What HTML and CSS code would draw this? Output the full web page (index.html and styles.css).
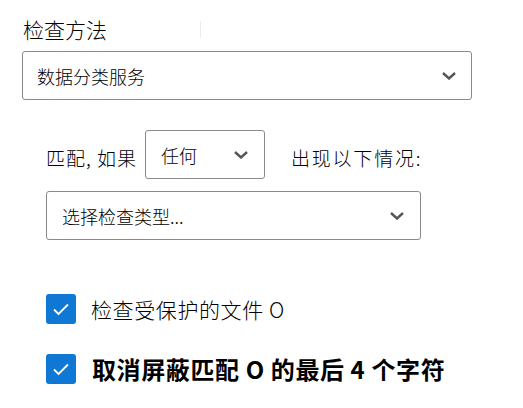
FILE: index.html
```html
<!DOCTYPE html>
<html lang="zh-CN">
<head>
<meta charset="utf-8">
<link rel="stylesheet" href="styles.css">
</head>
<body>
<div class="page">
  <div class="label-row">
    <span class="label">检查方法</span>
    <span class="caret-line"></span>
  </div>
  <div class="select select-wide">
    <span class="select-text">数据分类服务</span>
    <svg class="chev" width="14" height="8" viewBox="0 0 14 8"><path d="M1 1 L7 6.5 L13 1" fill="none" stroke="#555" stroke-width="2.4"/></svg>
  </div>
  <div class="conditions">
    <div class="match-row">
      <span class="match-text">匹配, 如果</span>
      <div class="select select-small">
        <span class="select-text">任何</span>
        <svg class="chev" width="14" height="8" viewBox="0 0 14 8"><path d="M1 1 L7 6.5 L13 1" fill="none" stroke="#555" stroke-width="2.4"/></svg>
      </div>
      <span class="match-text after">出现以下情况:</span>
    </div>
    <div class="select select-type">
      <span class="select-text">选择检查类型...</span>
      <svg class="chev" width="14" height="8" viewBox="0 0 14 8"><path d="M1 1 L7 6.5 L13 1" fill="none" stroke="#555" stroke-width="2.4"/></svg>
    </div>
    <div class="checks">
      <div class="check-row">
        <span class="box"><svg width="18" height="14" viewBox="0 0 18 14"><path d="M2 7.5 L6.5 12 L16 2.5" fill="none" stroke="#fff" stroke-width="1.8"/></svg></span>
        <span class="check-text">检查受保护的文件 O</span>
      </div>
      <div class="check-row">
        <span class="box"><svg width="18" height="14" viewBox="0 0 18 14"><path d="M2 7.5 L6.5 12 L16 2.5" fill="none" stroke="#fff" stroke-width="1.8"/></svg></span>
        <span class="check-text bold">取消屏蔽匹配 O 的最后 4 个字符</span>
      </div>
    </div>
  </div>
</div>
</body>
</html>
```
FILE: styles.css
```css
html, body {
  margin: 0;
  padding: 0;
  background: #fff;
}
body {
  font-family: "Noto Sans CJK SC", "Noto Sans", sans-serif;
  font-weight: 300;
  color: #000;
  width: 523px;
  height: 408px;
  overflow: hidden;
}
.page {
  padding: 14px 0 0 22px;
}
.label-row {
  display: flex;
  align-items: center;
  height: 30px;
  padding-left: 1px;
}
.label {
  font-size: 21px;
  line-height: 30px;
}
.caret-line {
  width: 1px;
  height: 17px;
  background: #ececec;
  margin-left: 93px;
}
.select {
  box-sizing: border-box;
  height: 49px;
  border: 1px solid #8a8a8a;
  border-radius: 3px;
  display: flex;
  align-items: center;
  justify-content: space-between;
  background: #fff;
}
.select-wide {
  width: 450px;
  margin-top: 7px;
  padding: 0 15px 0 14px;
}
.select-text {
  font-size: 18px;
  line-height: 24px;
}
.chev {
  display: block;
}
.conditions {
  padding-left: 24px;
  margin-top: 30px;
}
.match-row {
  display: flex;
  align-items: center;
  height: 49px;
}
.match-text {
  font-size: 19px;
  line-height: 24px;
  margin-top: 6px;
  letter-spacing: 1px;
}
.match-text.after {
  margin-left: 26px;
  letter-spacing: 1.8px;
}
.select-small {
  width: 120px;
  margin-left: 8px;
  padding: 0 16px 0 15px;
}
.select-type {
  width: 375px;
  margin-top: 12px;
  padding: 0 16px 0 15px;
}
.checks {
  margin-top: 54px;
  display: flex;
  flex-direction: column;
  gap: 30px;
}
.check-row {
  display: flex;
  align-items: center;
  height: 30px;
}
.box {
  width: 30px;
  height: 30px;
  border-radius: 3px;
  background: #0f78d4;
  display: flex;
  align-items: center;
  justify-content: center;
  flex-shrink: 0;
}
.check-text {
  font-size: 21px;
  margin-left: 15px;
  letter-spacing: 0.6px;
  line-height: 30px;
}
.check-text.bold {
  font-weight: 700;
  font-size: 24px;
  color: #000;
  margin-left: 16px;
  letter-spacing: 0.6px;
}
```
